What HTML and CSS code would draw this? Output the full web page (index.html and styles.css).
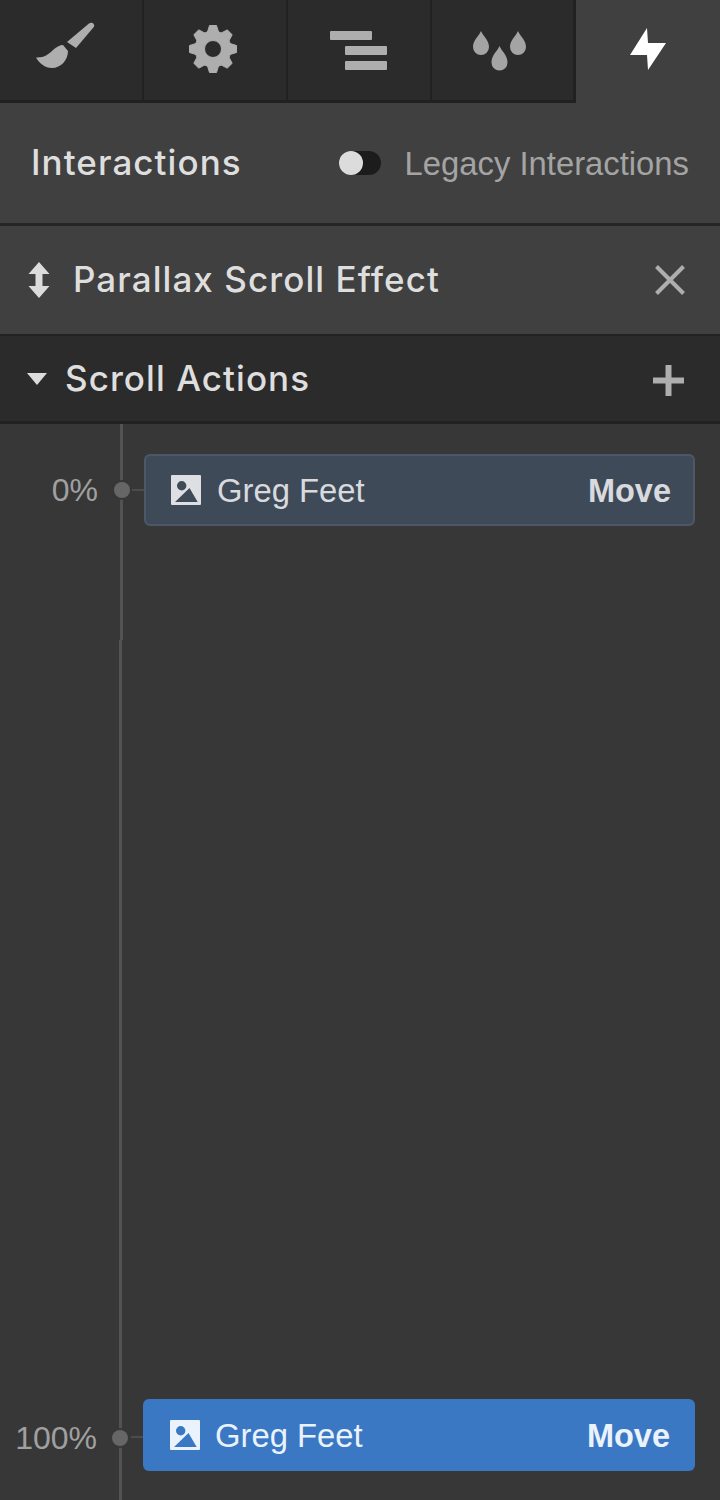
FILE: index.html
```html
<!DOCTYPE html>
<html lang="en">
<head>
<meta charset="utf-8">
<title>Interactions</title>
<link rel="stylesheet" href="styles.css">
</head>
<body>
<div class="panel">
  <nav class="tabs">
    <div class="tab">
      <svg class="tab-icon" width="144" height="100" viewBox="0 0 144 100"><path class="g" d="M67 42L89 23.500C91.500 21.500 95.500 24 93.800 27L76 48Z"/><path class="g" d="M36 57.500C44 58 49 54 53 50C56 47 60 45 63 45L68 51C68 60 61 68 52 68C45 68 39 63 36 57.500Z"/></svg>
    </div>
    <div class="tab">
      <svg class="tab-icon" width="144" height="100" viewBox="0 0 144 100">
        <defs><path id="tooth" d="M-5.500-17L-3.500-23.500H3.500L5.500-17Z"/></defs>
        <g class="gear" transform="translate(69 49)">
          <use href="#tooth"/>
          <use href="#tooth" transform="rotate(45)"/>
          <use href="#tooth" transform="rotate(90)"/>
          <use href="#tooth" transform="rotate(135)"/>
          <use href="#tooth" transform="rotate(180)"/>
          <use href="#tooth" transform="rotate(225)"/>
          <use href="#tooth" transform="rotate(270)"/>
          <use href="#tooth" transform="rotate(315)"/>
          <path fill-rule="evenodd" d="M0-18a18 18 0 1 0 0 36a18 18 0 1 0 0-36z M0-8.500a8.500 8.500 0 1 1 0 17a8.500 8.500 0 1 1 0-17z"/>
        </g>
      </svg>
    </div>
    <div class="tab">
      <svg class="tab-icon" width="144" height="100" viewBox="0 0 144 100"><rect class="g" x="42" y="31" width="42" height="9" rx="1"/><rect class="g" x="57" y="46" width="42" height="9" rx="1"/><rect class="g" x="57" y="61" width="42" height="9" rx="1"/></svg>
    </div>
    <div class="tab">
      <svg class="tab-icon" width="144" height="100" viewBox="0 0 144 100"><path class="d" d="M49 31C51 36 57 40 57 47A8 8 0 0 1 41 47C41 40 47 36 49 31Z"/><path class="d" d="M67.500 46C69.500 51 75.500 55 75.500 62.500A8 8 0 0 1 59.500 62.500C59.500 55 65.500 51 67.500 46Z"/><path class="d" d="M86 31C88 36 94 40 94 47A8 8 0 0 1 78 47C78 40 84 36 86 31Z"/></svg>
    </div>
    <div class="tab tab-active">
      <svg class="tab-icon" width="144" height="100" viewBox="0 0 144 100"><path class="w" d="M71 28L72 43L90 43L72 70L71 55L54 55Z"/></svg>
    </div>
  </nav>

  <header class="head-row">
    <h1 class="title">Interactions</h1>
    <div class="legacy">
      <span class="toggle"><span class="knob"></span></span>
      <span class="legacy-label">Legacy Interactions</span>
    </div>
  </header>

  <section class="effect-row">
    <svg class="updown" width="22" height="36" viewBox="0 0 22 36"><path class="l" d="M11 0L21.500 12H14.500V24H21.500L11 36L.5 24H7.500V12H.5Z"/></svg>
    <span class="effect-name">Parallax Scroll Effect</span>
    <svg class="close" width="30" height="30" viewBox="0 0 30 30"><path d="M1.500 1.500L28.500 28.500M28.500 1.500L1.500 28.500"/></svg>
  </section>

  <section class="actions-row">
    <span class="caret"></span>
    <span class="actions-name">Scroll Actions</span>
    <svg class="plus" width="31" height="31" viewBox="0 0 31 31"><path d="M12.500 0h6v12.500h12.500v6H18.500v12.500h-6V18.500H0v-6h12.500z"/></svg>
  </section>

  <main class="timeline">
    <div class="rail-top"></div>
    <div class="rail-bottom"></div>
    <div class="step step-first">
      <span class="pct">0%</span>
      <span class="dot"></span>
      <span class="tick"></span>
      <div class="card card-muted">
        <svg class="pic" width="30" height="30" viewBox="0 0 30 30"><path class="pic-bg" fill-rule="evenodd" d="M1 0h28a1 1 0 0 1 1 1v28a1 1 0 0 1-1 1H1a1 1 0 0 1-1-1V1a1 1 0 0 1 1-1z M10.700 6a4.700 4.700 0 1 0 0 9.400a4.700 4.700 0 1 0 0-9.400z M18.500 13L4 27h22.700z"/></svg>
        <span class="card-name">Greg Feet</span>
        <span class="card-action">Move</span>
      </div>
    </div>
    <div class="step step-last">
      <span class="pct">100%</span>
      <span class="dot"></span>
      <span class="tick"></span>
      <div class="card card-active">
        <svg class="pic" width="30" height="30" viewBox="0 0 30 30"><path class="pic-bg" fill-rule="evenodd" d="M1 0h28a1 1 0 0 1 1 1v28a1 1 0 0 1-1 1H1a1 1 0 0 1-1-1V1a1 1 0 0 1 1-1z M10.700 6a4.700 4.700 0 1 0 0 9.400a4.700 4.700 0 1 0 0-9.400z M18.500 13L4 27h22.700z"/></svg>
        <span class="card-name">Greg Feet</span>
        <span class="card-action">Move</span>
      </div>
    </div>
  </main>
</div>
</body>
</html>
```
FILE: styles.css
```css
* { box-sizing: border-box; }
html, body { margin: 0; padding: 0; }
body { width: 720px; height: 1500px; overflow: hidden; background: #373737; font-family: "Liberation Sans", Arial, sans-serif; }
.panel { width: 720px; height: 1500px; display: flex; flex-direction: column; background: #373737; }

.tabs { display: flex; height: 103px; background: #404040; flex: none; }
.tab { width: 144px; height: 103px; background: #2b2b2b; border-right: 2px solid #212121; border-bottom: 3px solid #212121; }
.tab:nth-child(4) { border-right-width: 3px; }
.tab-active { background: #404040; border: 0; }
.tab-icon { display: block; overflow: visible; }
.g { fill: #aeaeae; }
.gear { fill: #aeaeae; stroke: #aeaeae; stroke-width: 1; stroke-linejoin: round; }
.d { fill: #a4a4a4; }
.w { fill: #fff; }
.l { fill: #dcdcdc; }

.head-row { height: 123px; flex: none; display: flex; align-items: center; justify-content: space-between; padding: 0 31px 0 31px; background: #404040; border-bottom: 3px solid #262626; }
.title { margin: 0 0 2px; font-family: Inter, "Liberation Sans", sans-serif; font-size: 35px; font-weight: 500; color: #dedede; letter-spacing: 1.060px; }
.legacy { display: flex; align-items: center; gap: 24px; }
.toggle { width: 42px; height: 24px; border-radius: 12px; background: #1c1c1c; display: block; }
.knob { display: block; width: 24px; height: 24px; border-radius: 50%; background: #dcdcdc; }
.legacy-label { padding-top: 2px; font-size: 32.800px; color: #a4a4a4; }

.effect-row { height: 110px; flex: none; display: flex; align-items: center; padding: 0 35px 0 28px; background: #404040; border-bottom: 2px solid #222; }
.effect-name { margin: 0 0 2px 23px; font-family: Inter, "Liberation Sans", sans-serif; font-weight: 500; font-size: 35px; color: #dedede; letter-spacing: 1.060px; }
.close { margin-left: auto; }
.close path { stroke: #aeaeae; stroke-width: 4; fill: none; }

.actions-row { height: 88px; flex: none; display: flex; align-items: center; padding: 0 36px 0 27px; background: #2b2b2b; border-bottom: 3px solid #212121; }
.caret { width: 0; height: 0; margin-top: 1px; border-left: 10.500px solid transparent; border-right: 10.500px solid transparent; border-top: 12px solid #dcdcdc; }
.actions-name { margin: 0 0 2px 18px; font-family: Inter, "Liberation Sans", sans-serif; font-weight: 500; font-size: 35px; color: #dedede; letter-spacing: 1.060px; }
.plus { margin-left: auto; margin-top: 4px; fill: #aeaeae; }

.timeline { position: relative; flex: 1; display: flex; flex-direction: column; justify-content: space-between; padding: 30px 25px 29px 0; background: #373737; }
.rail-top { position: absolute; left: 120px; top: 0; width: 3px; height: 216px; background: #535353; }
.rail-bottom { position: absolute; left: 119px; top: 216px; width: 3px; bottom: 0; background: #535353; }
.step { position: relative; display: flex; align-items: center; height: 72px; }
.pct { width: 98px; text-align: right; font-size: 32px; color: #a0a0a0; flex: none; }
.dot { position: relative; width: 16px; height: 16px; border-radius: 50%; background: #666; margin-left: 16px; box-shadow: 0 0 0 2px #373737; flex: none; }
.tick { width: 12px; height: 2px; margin-left: 2px; background: #4c4c4c; flex: none; }
.step-last .pct { width: 97px; margin-top: 6px; }
.step-last .dot { margin-left: 15px; margin-top: 6px; }
.step-last .tick { margin-top: 4px; margin-left: 3px; }
.card { flex: 1; height: 72px; border-radius: 6px; display: flex; align-items: center; padding: 0 25px 0 27px; }
.card-muted { background: #3f4a59; border: 2px solid #4c5767; padding: 0 22px 0 25px; color: #d8dadd; }
.card-active { background: #3a78c4; color: #eaf2fc; }
.pic { flex: none; }
.pic-bg { fill: #dedfe2; }
.card-active .pic-bg { fill: #eaf2fc; }
.card-name { margin-left: 16px; padding-top: 2px; font-size: 32.800px; }
.card-active .card-name { margin-left: 15px; }
.card-action { margin-left: auto; padding-top: 2px; font-size: 32.500px; font-weight: 700; }
```
